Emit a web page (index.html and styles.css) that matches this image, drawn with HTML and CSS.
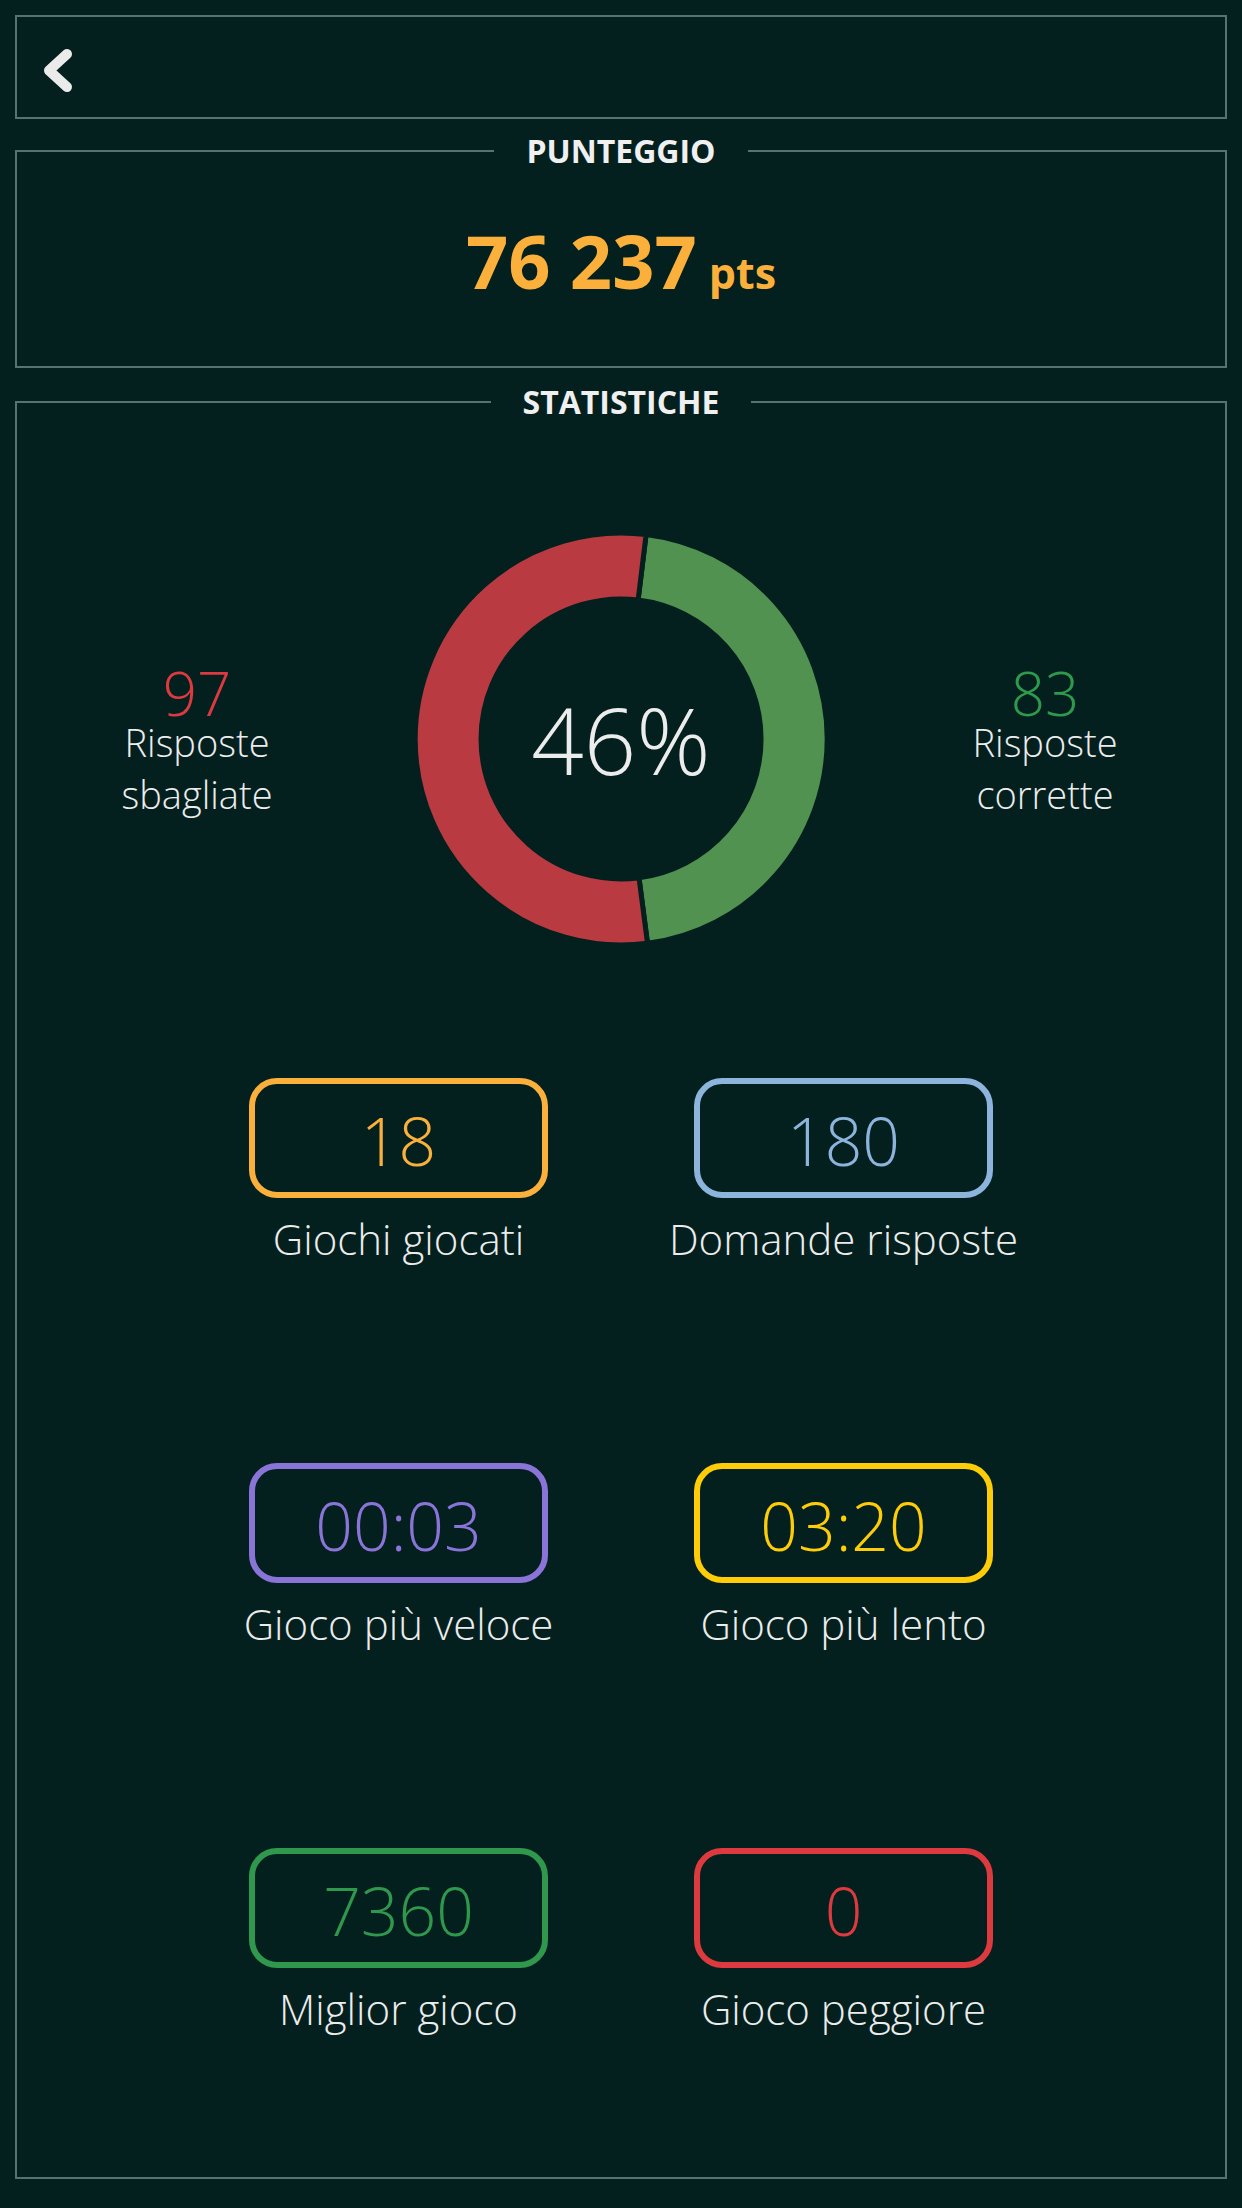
FILE: index.html
```html
<!DOCTYPE html>
<html lang="it">

<head>
    <meta charset="UTF-8">
    <meta name="viewport" content="width=device-width, initial-scale=1.0">
    <title>Statistiche</title>
    <link rel="stylesheet" href="styles.css">
</head>

<body>
    <div class="page">
        <div class="topbar">
            <svg class="back" width="40" height="52" viewBox="0 0 40 52">
                <polyline points="28,9 10,25.5 28,42" fill="none" stroke="#ebebeb" stroke-width="10"
                    stroke-linecap="round" stroke-linejoin="round" />
            </svg>
        </div>

        <fieldset class="panel score">
            <legend>PUNTEGGIO</legend>
            <div class="score-value">76 237<span class="pts">pts</span></div>
        </fieldset>

        <fieldset class="panel stats">
            <legend>STATISTICHE</legend>

            <div class="answers">
                <div class="answer">
                    <div class="answer-num wrong">97</div>
                    <div class="answer-label">Risposte<br>sbagliate</div>
                </div>

                <div class="donut">
                    <svg width="412" height="412" viewBox="-206 -206 412 412">
                        <!-- green: 83/180, red: 97/180 -->
                        <path d="M 25.1 -204.5 A 206 206 0 0 1 26.5 204.3 L 18.0 138.8 A 140 140 0 0 0 17.1 -139.0 Z"
                            fill="#529250" stroke="#03201f" stroke-width="5" />
                        <path d="M 26.5 204.3 A 206 206 0 1 1 25.1 -204.5 L 17.1 -139.0 A 140 140 0 1 0 18.0 138.8 Z"
                            fill="#ba3a41" stroke="#03201f" stroke-width="5" />
                    </svg>
                    <div class="donut-text">46%</div>
                </div>

                <div class="answer">
                    <div class="answer-num right">83</div>
                    <div class="answer-label">Risposte<br>corrette</div>
                </div>
            </div>

            <div class="tiles">
                <div class="tile">
                    <div class="tile-box orange">18</div>
                    <div class="tile-label">Giochi giocati</div>
                </div>
                <div class="tile">
                    <div class="tile-box blue">180</div>
                    <div class="tile-label">Domande risposte</div>
                </div>
                <div class="tile">
                    <div class="tile-box purple">00:03</div>
                    <div class="tile-label">Gioco più veloce</div>
                </div>
                <div class="tile">
                    <div class="tile-box yellow">03:20</div>
                    <div class="tile-label">Gioco più lento</div>
                </div>
                <div class="tile">
                    <div class="tile-box green">7360</div>
                    <div class="tile-label">Miglior gioco</div>
                </div>
                <div class="tile">
                    <div class="tile-box red">0</div>
                    <div class="tile-label">Gioco peggiore</div>
                </div>
            </div>
        </fieldset>
    </div>
</body>

</html>
```

FILE: styles.css
```css
body {
    margin: 0;
    background-color: #03201f;
    color: #ececec;
    font-family: "Open Sans", "Noto Sans", sans-serif;
}

.page {
    padding: 15px;
}

.topbar {
    height: 104px;
    box-sizing: border-box;
    border: 2px solid #56736f;
    display: flex;
    align-items: center;
    padding-left: 22px;
}

.back {
    margin-top: 7px;
}

.panel {
    margin: 10px 0 0;
    padding: 0;
    border: 2px solid #56736f;
    min-width: 0;
}

.panel legend {
    margin: 0 auto;
    padding: 0 32px;
    font-size: 32px;
    line-height: 44px;
    font-weight: 700;
    color: #f0f0f0;
}

.score {
    padding: 50px 0 55px;
}

.score-value {
    text-align: center;
    font-size: 74px;
    line-height: 76px;
    font-weight: 700;
    color: #fbb03b;
}

.pts {
    margin-left: 12px;
    font-size: 43px;
}

.stats {
    margin-top: 12px;
    padding: 109px 0 140px;
}

.answers {
    display: grid;
    grid-template-columns: 360px 1fr 360px;
    align-items: center;
}

.answer {
    padding-top: 12px;
    text-align: center;
    font-weight: 300;
}

.answer-num {
    font-size: 60px;
    line-height: 46px;
}

.answer-num.wrong {
    color: #dc3a40;
}

.answer-num.right {
    color: #2e9a4c;
}

.answer-label {
    font-size: 38px;
    line-height: 52px;
}

.donut {
    position: relative;
    display: flex;
    justify-content: center;
}

.donut svg {
    display: block;
}

.donut-text {
    position: absolute;
    top: 0;
    left: 0;
    right: 0;
    bottom: 0;
    display: flex;
    justify-content: center;
    align-items: center;
    font-size: 92px;
    font-weight: 300;
}

.tiles {
    display: grid;
    grid-template-columns: 299px 299px;
    column-gap: 146px;
    row-gap: 196px;
    justify-content: center;
    margin-top: 133px;
}

.tile {
    display: flex;
    flex-direction: column;
    align-items: center;
}

.tile-box {
    width: 100%;
    height: 120px;
    box-sizing: border-box;
    border: 6px solid;
    border-radius: 28px;
    display: flex;
    justify-content: center;
    align-items: center;
    padding-top: 4px;
    font-size: 66px;
    font-weight: 300;
}

.tile-label {
    margin-top: 12px;
    font-size: 42px;
    line-height: 57px;
    font-weight: 300;
    white-space: nowrap;
}

.orange {
    color: #fbb03b;
}

.blue {
    color: #8cb4dc;
}

.purple {
    color: #8a74d8;
}

.yellow {
    color: #ffcc08;
}

.green {
    color: #2f984c;
}

.red {
    color: #dc3a3f;
}
```
